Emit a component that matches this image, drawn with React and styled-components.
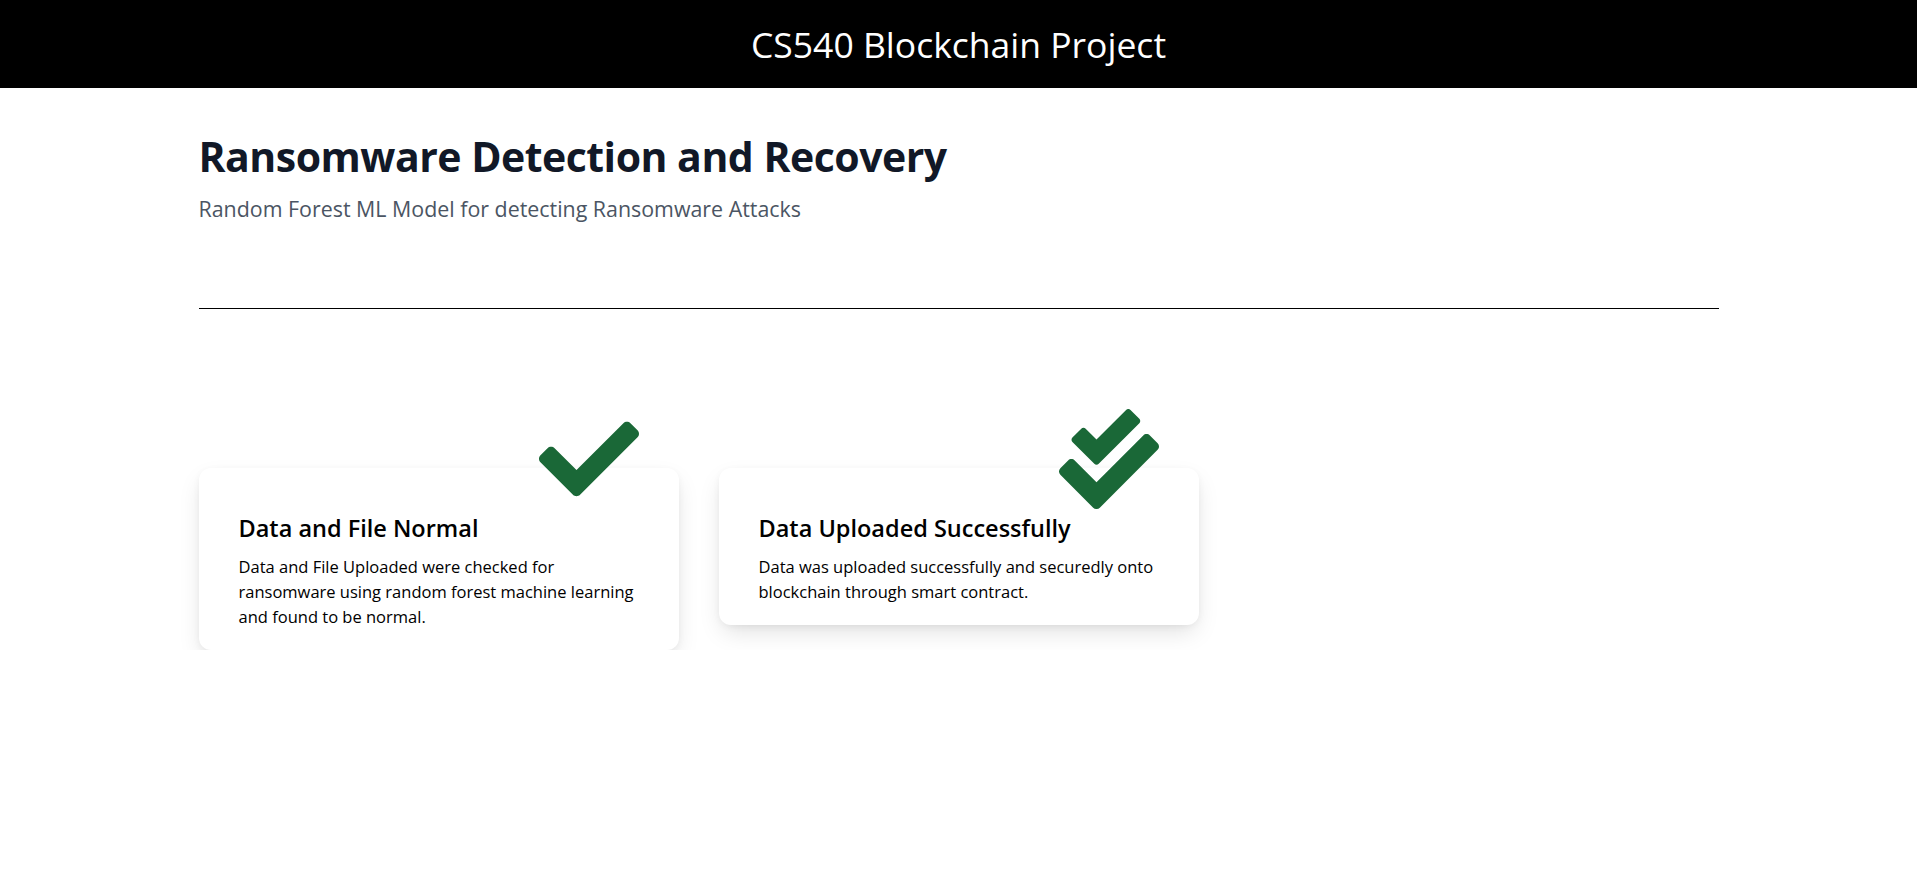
import React from 'react';
import styled, { createGlobalStyle } from 'styled-components';
import { FaCheck, FaCheckDouble } from 'react-icons/fa';

const GlobalStyle = createGlobalStyle`
  body {
    margin: 0;
    background: #fff;
    font-family: "Open Sans", "Noto Sans", sans-serif;
  }
`;

const TopBar = styled.header`
  height: 88px;
  background: #000;
  color: #fff;
  display: flex;
  justify-content: center;
  align-items: center;
  font-size: 35.5px;
  font-weight: 400;
`;

const Main = styled.main`
  max-width: 1520px;
  margin: 0 auto;
  padding-top: 40px;
`;

const Heading = styled.h1`
  margin: 0;
  font-size: 41px;
  line-height: 56px;
  font-weight: 700;
  color: #111827;
  letter-spacing: -0.5px;
`;

const Subtitle = styled.p`
  margin: 11px 0 0;
  font-size: 21.4px;
  line-height: 28px;
  color: #4b5563;
`;

const Divider = styled.hr`
  margin: 85px 0 0;
  border: none;
  border-top: 1px solid #000;
`;

const CardRow = styled.div`
  display: flex;
  align-items: flex-start;
  gap: 40px;
  margin-top: 159px;
`;

const Card = styled.div`
  position: relative;
  width: 480px;
  box-sizing: border-box;
  padding: 44px 36px 21px 40px;
  background: #fff;
  border-radius: 12px;
  box-shadow: 0 10px 24px -4px rgba(0, 0, 0, 0.13), 0 2px 8px -2px rgba(0, 0, 0, 0.08);
`;

const Badge = styled.div`
  position: absolute;
  top: -59px;
  right: 40px;
  width: 100px;
  height: 100px;
  color: #1a6837;
  display: flex;
`;

const CardTitle = styled.h2`
  margin: 0;
  font-size: 23.5px;
  line-height: 32px;
  font-weight: 600;
  color: #000;
`;

const CardText = styled.p`
  margin: 10px 0 0;
  font-size: 16.5px;
  line-height: 25px;
  color: #000;
`;

const cards = [
  {
    icon: FaCheck,
    title: 'Data and File Normal',
    text: 'Data and File Uploaded were checked for ransomware using random forest machine learning and found to be normal.',
  },
  {
    icon: FaCheckDouble,
    title: 'Data Uploaded Successfully',
    text: 'Data was uploaded successfully and securedly onto blockchain through smart contract.',
  },
];

export default function App() {
  return (
    <>
      <GlobalStyle />
      <TopBar>CS540 Blockchain Project</TopBar>
      <Main>
        <Heading>Ransomware Detection and Recovery</Heading>
        <Subtitle>Random Forest ML Model for detecting Ransomware Attacks</Subtitle>
        <Divider />
        <CardRow>
          {cards.map(({ icon: Icon, title, text }) => (
            <Card key={title}>
              <Badge>
                <Icon size={100} />
              </Badge>
              <CardTitle>{title}</CardTitle>
              <CardText>{text}</CardText>
            </Card>
          ))}
        </CardRow>
      </Main>
    </>
  );
}
